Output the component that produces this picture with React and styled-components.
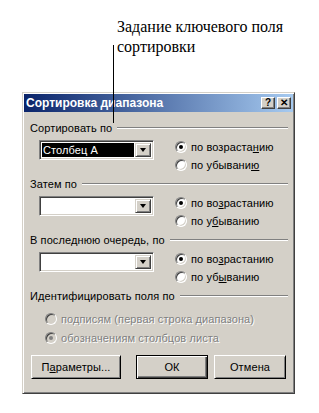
import React from 'react';
import styled, { createGlobalStyle, css } from 'styled-components';

const GlobalStyle = createGlobalStyle`
  html, body {
    margin: 0;
    padding: 0;
    background: #ffffff;
  }
`;

const Page = styled.div`
  position: relative;
  width: 319px;
  height: 413px;
  overflow: hidden;
  background: #ffffff;
  padding-top: 17px;
  box-sizing: border-box;
`;

const Note = styled.div`
  margin-left: 117px;
  font-family: 'Liberation Serif', 'Times New Roman', serif;
  font-size: 16px;
  line-height: 20px;
  color: #000;
`;

// leader line from the note down to the first key label
const Leader = styled.div`
  position: absolute;
  left: 113px;
  top: 45px;
  width: 1px;
  height: 78px;
  background: #000;
`;

const Dialog = styled.div`
  margin: 35px 0 0 22px;
  width: 273px;
  height: 302px;
  box-sizing: border-box;
  padding: 1px;
  background: #d4d0c8;
  border: 1px solid;
  border-color: #d4d0c8 #404040 #404040 #d4d0c8;
  box-shadow: inset 1px 1px #ffffff, inset -1px -1px #808080;
  display: flex;
  flex-direction: column;
  font-family: 'Liberation Sans', Arial, sans-serif;
  font-size: 11px;
  letter-spacing: 0.1px;
  color: #000;
`;

const TitleBar = styled.div`
  height: 18px;
  display: flex;
  align-items: center;
  padding: 0 2px 0 2px;
  background: linear-gradient(to right, #0a246a, #a6caf0);
`;

const Title = styled.div`
  flex: 1;
  color: #fff;
  font-weight: bold;
  font-size: 12px;
  letter-spacing: 0;
  white-space: nowrap;
`;

const CapButton = styled.div`
  width: 14px;
  height: 12px;
  box-sizing: border-box;
  margin-left: ${(p) => (p.$gap ? '2px' : '0')};
  background: #d4d0c8;
  border: 1px solid;
  border-color: #fff #404040 #404040 #fff;
  box-shadow: inset -1px -1px #808080;
  display: flex;
  align-items: center;
  justify-content: center;
  font-weight: bold;
  font-size: 10px;
  line-height: 1;
`;

const Body = styled.div`
  flex: 1;
  display: flex;
  flex-direction: column;
  padding: 9px 5px 0 6px;
`;

const GroupHead = styled.div`
  height: 14px;
  display: flex;
  align-items: center;
  white-space: nowrap;
`;

const Etch = styled.div`
  flex: 1;
  margin-left: 5px;
  height: 0;
  border-top: 1px solid #808080;
  border-bottom: 1px solid #fff;
`;

const KeyRow = styled.div`
  display: flex;
  padding-top: 3px;
  margin-bottom: 3px;
`;

const Combo = styled.div`
  margin: 2px 0 0 9px;
  width: 115px;
  height: 20px;
  box-sizing: border-box;
  padding: 2px;
  background: #fff;
  border: 1px solid;
  border-color: #808080 #fff #fff #808080;
  box-shadow: inset 1px 1px #404040, inset -1px -1px #d4d0c8;
  display: flex;
`;

const ComboText = styled.div`
  flex: 1;
  margin-right: 1px;
  display: flex;
  align-items: center;
  padding-left: 1px;
  white-space: nowrap;
  ${(p) =>
    p.$selected &&
    css`
      background: #000;
      color: #fff;
    `}
`;

const DropButton = styled.div`
  width: 16px;
  box-sizing: border-box;
  background: #d4d0c8;
  border: 1px solid;
  border-color: #d4d0c8 #404040 #404040 #d4d0c8;
  box-shadow: inset 1px 1px #fff, inset -1px -1px #808080;
  display: flex;
  align-items: center;
  justify-content: center;
`;

const Arrow = styled.div`
  width: 0;
  height: 0;
  border-left: 3.5px solid transparent;
  border-right: 3.5px solid transparent;
  border-top: 4px solid #000;
`;

const Options = styled.div`
  margin-left: 21px;
  display: flex;
  flex-direction: column;
`;

const Option = styled.div`
  height: ${(p) => p.$h || 18}px;
  display: flex;
  align-items: center;
  white-space: nowrap;
  color: ${(p) => (p.$disabled ? '#808080' : '#000')};
  text-shadow: ${(p) => (p.$disabled ? '1px 1px #fff' : 'none')};
`;

const Radio = styled.span`
  position: relative;
  width: 12px;
  height: 12px;
  box-sizing: border-box;
  margin-right: 4px;
  border-radius: 50%;
  border: 1px solid;
  border-color: #808080 #fff #fff #808080;
  box-shadow: inset 1px 1px #404040, inset -1px -1px #d4d0c8;
  background: ${(p) => (p.$disabled ? '#d4d0c8' : '#fff')};

  &::after {
    content: '';
    display: ${(p) => (p.$checked ? 'block' : 'none')};
    position: absolute;
    left: 3px;
    top: 3px;
    width: 4px;
    height: 4px;
    border-radius: 50%;
    background: ${(p) => (p.$disabled ? '#808080' : '#000')};
  }
`;

const U = styled.span`
  text-decoration: underline;
`;

const IdentBlock = styled.div`
  display: flex;
  flex-direction: column;
  padding: 6px 0 0 15px;
`;

const Buttons = styled.div`
  display: flex;
  margin-top: 8px;
  padding-left: 1px;
`;

const Btn = styled.div`
  width: ${(p) => p.$w}px;
  height: 24px;
  margin-left: ${(p) => p.$ml || 0}px;
  box-sizing: border-box;
  background: #d4d0c8;
  display: flex;
  align-items: center;
  justify-content: center;
  border: 1px solid;
  border-color: #fff #000 #000 #fff;
  box-shadow: inset 1px 1px #d4d0c8, inset -1px -1px #808080;
  ${(p) =>
    p.$default &&
    css`
      border-color: #000;
      box-shadow: inset 1px 1px #fff, inset -1px -1px #404040,
        inset -2px -2px #808080;
    `}
`;

function KeyGroup({ label, value, up, down }) {
  return (
    <>
      <GroupHead>
        {label}
        <Etch />
      </GroupHead>
      <KeyRow>
        <Combo>
          <ComboText $selected={!!value}>{value}</ComboText>
          <DropButton>
            <Arrow />
          </DropButton>
        </Combo>
        <Options>
          <Option>
            <Radio $checked />
            {up}
          </Option>
          <Option>
            <Radio />
            {down}
          </Option>
        </Options>
      </KeyRow>
    </>
  );
}

export default function App() {
  return (
    <>
      <GlobalStyle />
      <Page>
        <Note>
          Задание ключевого поля
          <br />
          сортировки
        </Note>
        <Dialog>
          <TitleBar>
            <Title>Сортировка диапазона</Title>
            <CapButton>?</CapButton>
            <CapButton $gap>✕</CapButton>
          </TitleBar>
          <Body>
            <KeyGroup
              label="Сортировать по"
              value="Столбец А"
              up={<>по возраста<U>н</U>ию</>}
              down={<>по убывани<U>ю</U></>}
            />
            <KeyGroup
              label="Затем по"
              up={<>по во<U>з</U>растанию</>}
              down={<>по у<U>б</U>ыванию</>}
            />
            <KeyGroup
              label="В последнюю очередь, по"
              up={<>по во<U>з</U>растанию</>}
              down={<>по уб<U>ы</U>ванию</>}
            />
            <GroupHead>
              Идентифицировать поля по
              <Etch />
            </GroupHead>
            <IdentBlock>
              <Option $h={19} $disabled>
                <Radio $disabled />
                подписям (первая строка диапазона)
              </Option>
              <Option $h={19} $disabled>
                <Radio $disabled $checked />
                обозначениям столбцов листа
              </Option>
            </IdentBlock>
            <Buttons>
              <Btn $w={90}>
                П<U>а</U>раметры...
              </Btn>
              <Btn $w={72} $ml={15} $default>
                ОК
              </Btn>
              <Btn $w={72} $ml={6}>
                Отмена
              </Btn>
            </Buttons>
          </Body>
        </Dialog>
        <Leader />
      </Page>
    </>
  );
}
